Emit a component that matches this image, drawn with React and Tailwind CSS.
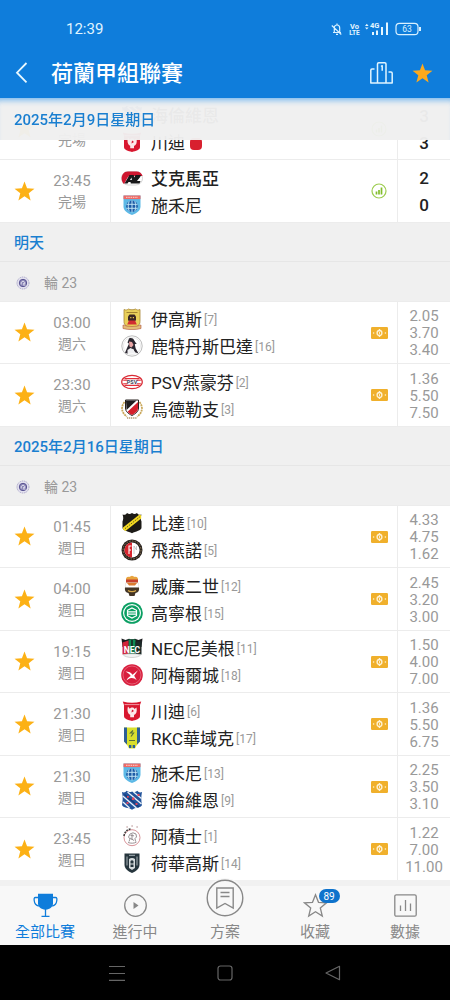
import React from 'react';

const STAR = 'M12 1.500l2.700 7.100 7.700.4-6 4.800 2 7.500L12 17l-6.400 4.300 2-7.500-6-4.800 7.700-.4z';

const Shield = 'M2.5 2h17v10.5c0 4-3.500 6.500-8.500 8.500c-5-2-8.500-4.500-8.500-8.500z';

const crests = {
  heerenveen: (
    <>
      <path d="M1 3c2 1 3.500 .3 4.500-1.200c2.500 1 3.500 2 5.500 .7c2 1.300 3.500 .5 5.500-.7c1 1.500 2.500 2.200 4.500 1.200c-1 5-.8 9 0 13c-1 3.500-7 2-10 4.800c-3-2.800-9-1.300-10-4.800c.8-4 1-8 0-13z" fill="#23549b" />
      <path d="M1.800 7L15.500 19M6.500 3L20.500 15M2 13l6.500 6M12.500 3L20.500 9.500" stroke="#e8f0fa" strokeWidth="1.300" />
      <path d="M3.500 5.500l14.500 12.500" stroke="#173a78" strokeWidth="1.200" />
      <path d="M11 8.500h2.500V11H11zM5.500 13h2v2h-2zM16.500 5h2v2h-2zM6 7h1.800v1.800H6zM14.500 14h2v2h-2z" fill="#e0455c" />
    </>
  ),
  twente: (
    <>
      <path d="M1.800 1.500c6 1.600 12.400 1.600 18.400 0l-1.200 3.500v11c0 3-4 3.800-8 5c-4-1.200-8-2-8-5V5z" fill="#d8172f" />
      <path d="M3.500 4.600h15" stroke="#f3a4ad" strokeWidth=".9" />
      <path d="M7 6.500l1.800 2.200c1-1.700 4-1.700 4.700.2l2-1.400c.8 4-.2 6.500-2.500 7.500v2.300h-3.800v-2.500C6.500 13.500 6 10 7 6.500z" fill="#fbe9ea" />
      <path d="M11 9.500l2 1.500-2.500 1.500z" fill="#d8172f" />
    </>
  ),
  az: (
    <>
      <rect x=".5" y="4.500" width="21" height="13.500" rx="6.700" fill="#fff" stroke="#b9b9b9" strokeWidth=".6" />
      <path d="M7 4.500h8.500c3.200 0 5.500 2 6 4.500H9c-3 0-4 6-6 8C-1 14 0 4.500 7 4.500z" fill="#cf1730" />
      <path d="M3.500 16.500l5-8.500h4.200l.6 2.500 1.200-2.500h5.500l-.8 2-3.200 4h3.500l-1 2.500h-8.700l-.3-1.500H7.500l-1 1.500z" fill="#18181a" />
      <path d="M9 13l1.500-2.500.4 2.500z" fill="#fff" />
    </>
  ),
  zwolle: (
    <>
      <path d="M2.500 1.500h17v11c0 4-3.500 6.500-8.500 8.500c-5-2-8.500-4.500-8.500-8.500z" fill="#5db9e6" />
      <path d="M2.500 1.500h17v3.600h-17z" fill="#ee6a66" />
      <path d="M5 3.300h12" stroke="#fbd5d2" strokeWidth="1" strokeDasharray="1.500 .8" />
      <circle cx="11" cy="12.200" r="5.800" fill="#1d5ba6" />
      <path d="M11 6.400v12M5.500 10.300h11M5.500 14.300h11M8.200 7.200c-1.300 3-1.300 7 0 10M13.800 7.200c1.300 3 1.300 7 0 10" stroke="#bfe4f6" strokeWidth="1" fill="none" />
    </>
  ),
  eagles: (
    <>
      <path d="M3 1.500c2 1 3.500.2 4.500-.5c1.500 1 5.500 1 7 0c1 .7 2.500 1.500 4.500.5v12c0 4-3 5.500-8 7c-5-1.500-8-3-8-7z" fill="#e9d05a" stroke="#a88735" strokeWidth=".8" />
      <path d="M5.500 4.500h11" stroke="#9a7b2b" strokeWidth=".9" />
      <path d="M7 8.500L8.500 6.500h5L15 8.500v3.500l-1.500 2h-5L7 12z" fill="#3b2723" />
      <path d="M8 12.500h6l1.800 4H6.200z" fill="#d22c31" />
      <path d="M9.200 9h1.200v1.200H9.200zM11.800 9H13v1.200h-1.200z" fill="#e9c94a" />
      <path d="M2 17c5 2 13 2 18 0v3.500c-5 1.500-13 1.500-18 0z" fill="#e3bd78" stroke="#b0563f" strokeWidth=".6" />
    </>
  ),
  sparta: (
    <>
      <circle cx="11" cy="11" r="10.200" fill="#fff" stroke="#aaa" strokeWidth=".8" />
      <circle cx="11" cy="11" r="8.600" fill="none" stroke="#ddd" strokeWidth=".6" />
      <path d="M8 3.500c2-1 4.500-.3 5 1.500l1.500 2.500 1.300 1-2 .8.800 4 2.900 5.200-3.500-1.300-2-3.500-3 1.500-2.500 3.300-2.500-.4 2-5 2-4.300-1.500-1.300z" fill="#2b2730" />
      <path d="M8 6.500l3 .5 1.500 3-2 2.500-2-1z" fill="#e9a5a5" />
      <path d="M6.500 15l3-2 3 1.500 1.500 3.500-4 .5-3.500-.5z" fill="#f0f0f2" />
    </>
  ),
  psv: (
    <>
      <ellipse cx="11" cy="11" rx="10.300" ry="6.600" fill="#fff" stroke="#d92b35" strokeWidth="1.200" />
      <path d="M3.500 7.600h15M2.200 9.300h4M15.800 9.300h4M2.200 12.700h4M15.800 12.700h4M3.500 14.400h15" stroke="#e0303b" strokeWidth="1.100" />
      <text x="11" y="13" fontSize="5.500" fontWeight="700" textAnchor="middle" fill="#3b3f59" fontFamily="Roboto">PSV</text>
    </>
  ),
  utrecht: (
    <>
      <path d="M3.500 4C-.5 9 .5 15 6 18.500M18.500 4c4 5 3 11-2.500 14.500" fill="none" stroke="#c9a85c" strokeWidth="1.800" strokeDasharray="2 .7" />
      <path d="M4.500 2h13v8c0 3.500-2.500 5.500-6.500 7.500c-4-2-6.500-4-6.500-7.500z" fill="#fff" stroke="#26211f" strokeWidth="1" />
      <path d="M5 2.500h10.500L5.500 12z" fill="#201e1f" />
      <path d="M17 4v6c0 3.500-2.500 5-6 7c-2-1-3.500-2-4.500-3.200z" fill="#d5202b" />
      <path d="M6 20h10" stroke="#b29a70" strokeWidth="1.300" strokeDasharray="1.200 .7" />
    </>
  ),
  nac: (
    <>
      <path d="M1.500 2.500c2.500.8 3.500 0 4.500-1.500c2 1.200 3 1.200 5 0c2 1.200 3 1.200 5 0c1 1.500 2 2.300 4.500 1.500c-1.200 3-.8 5 0 7v6c0 3.500-6 3.500-9.500 5.800c-3.500-2.300-9.500-2.300-9.500-5.800v-6c.8-2 1.200-4 0-7z" fill="#1c1a16" />
      <path d="M2 15.500L18.500 2.500l1.700 1V6.500L4.500 19 2 17.500z" fill="#f3d921" />
      <path d="M4 16.700L19 4.700" stroke="#5c5312" strokeWidth=".9" strokeDasharray="1.500 1" />
    </>
  ),
  feyenoord: (
    <>
      <circle cx="11" cy="11" r="10.500" fill="#26211f" />
      <circle cx="11" cy="11" r="9" fill="none" stroke="#a98d5c" strokeWidth=".8" strokeDasharray="1.600 1.200" />
      <circle cx="11" cy="11" r="7.600" fill="#fff" />
      <path d="M11 3.400a7.600 7.600 0 0 0 0 15.200z" fill="#d7262e" />
      <path d="M7.500 7h3M8 7v8M8 11h2" stroke="#fff" strokeWidth="1.100" />
      <path d="M13 7l2.500 4V7M13 7v8" stroke="#aaa" strokeWidth=".6" fill="none" />
    </>
  ),
  willem: (
    <>
      <path d="M5 4.500c0-2 1.500-3 3-2.500L11 .8 14 2c1.500-.5 3 .5 3 2.500v3H5z" fill="#e8a43d" />
      <path d="M5 4.500h12v3H5z" fill="#c7402e" />
      <path d="M4.500 8h13v5h-13z" fill="#fff" stroke="#ccc" strokeWidth=".4" />
      <path d="M6 8l2 2.500h6L16 8z" fill="#db7a2e" />
      <path d="M4 12.500h14c.5 3.500-1 5-3.500 5.500l-1 3h-5l-1-3C5 17.500 3.500 16 4 12.500z" fill="#433526" />
      <path d="M7 15.500c2 1.500 6 1.500 8 0" stroke="#d9aa48" strokeWidth="1.200" fill="none" />
    </>
  ),
  groningen: (
    <>
      <circle cx="11" cy="11" r="10.800" fill="#0b9f63" />
      <circle cx="11" cy="11" r="9" fill="#fff" />
      <circle cx="11" cy="11" r="7.800" fill="#0b9f63" />
      <path d="M6.500 8.300L11 6l4.500 2.300v5.400L11 16l-4.500-2.300z" fill="none" stroke="#fff" strokeWidth="1.200" />
      <path d="M6.500 9.800h9M6.500 12.200h9" stroke="#fff" strokeWidth="1.200" />
    </>
  ),
  nec: (
    <>
      <path d="M.5 1.500l4 1.500 3.500-1.200L11 2.500l3-.7L17.500 3l4-1.500-1 8.500H1.500z" fill="#1d1d1f" />
      <path d="M7.500 2.500h7V10h-7z" fill="#0e8c55" />
      <path d="M10 2.500h2V9h-2z" fill="#163a2c" />
      <path d="M1.500 5.500l6-2v14h-6z" fill="#d3253a" />
      <path d="M7.500 10h7v7.500h-7z" fill="#18794d" />
      <path d="M14.500 5l6-1v13.500h-6z" fill="#1b2a28" />
      <text x="11" y="15.600" fontSize="8.500" fontWeight="700" textAnchor="middle" fill="#fff" fontFamily="Roboto">NEC</text>
      <path d="M2 17.500c5-1 13-1 18 0c-2.500 4-15.500 4-18 0z" fill="#f2f2f2" stroke="#aaa" strokeWidth=".5" />
    </>
  ),
  almere: (
    <>
      <circle cx="11" cy="11" r="10.800" fill="#d81e3d" />
      <circle cx="11" cy="11" r="9" fill="none" stroke="#ee8b9b" strokeWidth=".6" />
      <path d="M4.500 7.500c3.500 0 5.500 1.200 7 3.200L17 6.300l-3.800 5.500 2.500 4.500c-1.700-1.500-3.400-2.300-5.200-2.200c-2.200.2-3.800 1.400-5 2.400c1-2.500 2.500-3.600 4.200-4.500C8.500 10 6.800 8.700 4.500 7.500z" fill="#fff" />
    </>
  ),
  rkc: (
    <>
      <path d="M3 .500h16v14L15.500 18.500 14 21.500H8l-1.500-3L3 14.500z" fill="#d8df2c" />
      <path d="M3 .500h3v17L3 14.500zM19 .500h-3v17l3-3z" fill="#2c5f96" />
      <path d="M12 3.500l-2.500 2.500h3L10 9.500M8 13.500h6" stroke="#56703a" strokeWidth="1.200" fill="none" />
      <path d="M8 18h2.300v3H8zM11.700 18H14v3h-2.300z" fill="#2c5f96" />
    </>
  ),
  ajax: (
    <>
      <circle cx="11" cy="12.700" r="8" fill="#fff" stroke="#d2878d" strokeWidth=".9" />
      <path d="M3 11C3.500 7 6 4.500 9.500 4" stroke="#393939" strokeWidth="1.500" strokeDasharray="1.800 1" fill="none" />
      <path d="M10.500 1h1.200M5.500 2h1.200M15.500 2h1.200" stroke="#9a6a6a" strokeWidth="1.200" />
      <path d="M8 16.500l1-2.500-1.500-2L9 9l3-1.200 3 1.200.5 3-1.500 1.500.5 3M9.500 10.500l3.500.3M9 13l4 2.500M11 9v6M7 17.500c3 1 6 1 8.500-.5" stroke="#8d8488" strokeWidth=".9" fill="none" />
    </>
  ),
  heracles: (
    <>
      <path d="M3.500 1.500h15v11c0 4-3 6.500-7.500 8.500c-4.500-2-7.500-4.500-7.500-8.500z" fill="#26353d" />
      <path d="M6 4.500v9M16 4.500v9M8 3.300h6" stroke="#a9b3b8" strokeWidth="1" />
      <path d="M8 7c1.500-1.500 4.500-1.500 6 0v9l-3 2-3-2z" fill="#d5dadc" />
      <path d="M9.500 9c1-1 2-1 3 0v6h-3z" fill="#26353d" />
      <path d="M9 12h4" stroke="#d5dadc" strokeWidth="1" />
    </>
  ),
};

function Crest({ id }) {
  return (
    <svg viewBox="0 0 22 22" className="h-[22px] w-[22px] shrink-0" aria-hidden="true">
      {crests[id] || <path d={Shield} fill="#999" />}
    </svg>
  );
}

function Star({ className }) {
  return (
    <svg viewBox="0 0 24 24" className={className} aria-hidden="true">
      <path d={STAR} fill="currentColor" />
    </svg>
  );
}

function MoneyIcon() {
  return (
    <svg viewBox="0 0 17 12" className="h-3 w-[17px]" aria-hidden="true">
      <rect width="17" height="12" rx="1.200" fill="#f0b02c" />
      <path d="M8.500 2v8" stroke="#fff3d6" strokeWidth="1.400" />
      <ellipse cx="8.500" cy="6" rx="2.400" ry="2.500" fill="#f0b02c" stroke="#fff3d6" strokeWidth="1.300" />
      <path d="M8.500 4.800v2.400" stroke="#fff3d6" strokeWidth=".9" />
      <circle cx="2.600" cy="6" r=".8" fill="#fff3d6" />
      <circle cx="14.400" cy="6" r=".8" fill="#fff3d6" />
    </svg>
  );
}

function StatsIcon() {
  return (
    <svg viewBox="0 0 16 16" className="h-4 w-4" aria-hidden="true">
      <circle cx="8" cy="8" r="7" fill="none" stroke="#9ccc4e" strokeWidth="1.200" />
      <path d="M5.500 8.500v3M8 7v4.500M10.500 4.500v7" stroke="#82bd2c" strokeWidth="1.700" />
    </svg>
  );
}

const groups = [
  {
    date: '2025年2月9日星期日',
    pinned: true,
    matches: [
      { time: '', day: '完場', home: ['heerenveen', '海倫維恩'], away: ['twente', '川迪'], score: ['3', '3'], winner: 0, redCard: true },
      { time: '23:45', day: '完場', home: ['az', '艾克馬亞'], away: ['zwolle', '施禾尼'], score: ['2', '0'], winner: 0 },
    ],
  },
  {
    date: '明天',
    round: '輪 23',
    matches: [
      { time: '03:00', day: '週六', home: ['eagles', '伊高斯', 7], away: ['sparta', '鹿特丹斯巴達', 16], odds: ['2.05', '3.70', '3.40'] },
      { time: '23:30', day: '週六', home: ['psv', 'PSV燕豪芬', 2], away: ['utrecht', '烏德勒支', 3], odds: ['1.36', '5.50', '7.50'] },
    ],
  },
  {
    date: '2025年2月16日星期日',
    round: '輪 23',
    matches: [
      { time: '01:45', day: '週日', home: ['nac', '比達', 10], away: ['feyenoord', '飛燕諾', 5], odds: ['4.33', '4.75', '1.62'] },
      { time: '04:00', day: '週日', home: ['willem', '威廉二世', 12], away: ['groningen', '高寧根', 15], odds: ['2.45', '3.20', '3.00'] },
      { time: '19:15', day: '週日', home: ['nec', 'NEC尼美根', 11], away: ['almere', '阿梅爾城', 18], odds: ['1.50', '4.00', '7.00'] },
      { time: '21:30', day: '週日', home: ['twente', '川迪', 6], away: ['rkc', 'RKC華域克', 17], odds: ['1.36', '5.50', '6.75'] },
      { time: '21:30', day: '週日', home: ['zwolle', '施禾尼', 13], away: ['heerenveen', '海倫維恩', 9], odds: ['2.25', '3.50', '3.10'] },
      { time: '23:45', day: '週日', home: ['ajax', '阿積士', 1], away: ['heracles', '荷華高斯', 14], odds: ['1.22', '7.00', '11.00'] },
    ],
  },
];

function Team({ team, bold, redCard }) {
  const [id, name, rank] = team;
  return (
    <div className="flex h-[27px] items-center">
      <Crest id={id} />
      <span className={bold ? 'ml-2 pt-1 text-[17px] font-medium text-[#222]' : 'ml-2 pt-1 text-[17px] text-[#222]'}>{name}</span>
      {rank && <span className="ml-0.5 pt-0.5 text-xs text-[#999]">[{rank}]</span>}
      {redCard && <span className="mt-1 ml-[5px] h-3 w-3 rounded-sm bg-[#d8202f]" />}
    </div>
  );
}

function MatchRow({ match }) {
  return (
    <li className="flex border-b border-[#ececec] bg-white odd:min-h-[62px] even:min-h-[63px]">
      <button type="button" aria-label="收藏" className="flex w-12 shrink-0 items-center justify-center text-[#fcb116]">
        <Star className="h-[23px] w-[23px]" />
      </button>
      <div className="mr-3.5 flex w-12 shrink-0 flex-col justify-center pt-0.5 text-center text-[15px] leading-[21px] text-[#999]">
        <time className="h-[21px]">{match.time}</time>
        <span className="text-sm leading-[21px]">{match.day}</span>
      </div>
      <div className="flex min-w-0 flex-1 flex-col justify-center border-l border-[#ececec] pl-2.5">
        <Team team={match.home} bold={match.winner === 0} />
        <Team team={match.away} redCard={match.redCard} />
      </div>
      <div className="flex w-9 shrink-0 items-center justify-center">{match.score ? <StatsIcon /> : <MoneyIcon />}</div>
      <div className="flex w-[53px] shrink-0 flex-col justify-center border-l border-[#ececec] pt-0.5 text-center">
        {match.score
          ? match.score.map((s, i) => (
              <span key={i} className="text-[17px] leading-[27px] font-medium text-[#222]">{s}</span>
            ))
          : match.odds.map((o, i) => (
              <span key={i} className="text-[15px] leading-[17px] text-[#999]">{o}</span>
            ))}
      </div>
    </li>
  );
}

function RoundIcon() {
  return (
    <svg viewBox="0 0 14 14" className="h-3.5 w-3.5" aria-hidden="true">
      <circle cx="7" cy="7" r="6" fill="#e4e2ef" stroke="#a6a2c6" strokeWidth=".9" strokeDasharray="1.500 .7" />
      <circle cx="7" cy="7" r="3.700" fill="#8d88b8" stroke="#5a5492" strokeWidth="1" />
      <path d="M5.200 8.500V6.500L7 5l1.800 1.500v1.200H7M7 8.800l2.500.4" stroke="#fff" strokeWidth=".7" fill="none" />
    </svg>
  );
}

function Group({ group }) {
  return (
    <section>
      {group.pinned ? (
        <h2 className="sticky top-0 z-10 -mb-[42px] flex h-[42px] items-center bg-[#f0f0f0]/97 px-3.5 pt-0.5 text-[15px] font-medium text-[#1a7fd0] shadow-[inset_0_7px_6px_-5px_#6db3ee]">{group.date}</h2>
      ) : (
        <h2 className="flex h-[39px] items-center border-b border-[#e6e6e6] bg-[#f0f0f0] px-3.5 pt-0.5 text-[15px] font-medium text-[#1a7fd0]">{group.date}</h2>
      )}
      {group.round && (
        <div className="flex h-10 items-center gap-3.5 border-b border-[#ececec] bg-[#f0f0f0] px-4 pt-0.5 text-sm text-[#999]">
          <RoundIcon />
          <span>{group.round}</span>
        </div>
      )}
      <ul>
        {group.matches.map((m, i) => (
          <MatchRow key={i} match={m} />
        ))}
      </ul>
    </section>
  );
}

function StatusIcons() {
  return (
    <svg viewBox="0 0 92 16" className="h-4 w-[92px]" fill="none" stroke="#d9f1ff" strokeWidth="1.200" aria-hidden="true">
      <path d="M3 11.500h8M4.300 11V7c0-4 5.400-4 5.400 0v4M7 2.500v1M6 13.300h2M1.800 4.500l9.500 9" />
      <g fill="#e4f6ff" stroke="none" fontFamily="Roboto" fontWeight="700">
        <text x="24.500" y="7.500" fontSize="7.500" textAnchor="middle">Vo</text>
        <text x="24.500" y="14" fontSize="6.500" textAnchor="middle">LTE</text>
        <text x="40" y="7" fontSize="7.500">4G</text>
        <path d="M35 5l1.800-2.300L38.600 5zM35 6.500h3.600L36.800 8.500zM42 11h2v3h-2zM46 9.500h2V14h-2zM51 6h2v8h-2zM56 1.500h2V14h-2z" />
      </g>
      <rect x="66" y="2.300" width="22" height="11.400" rx="3.500" />
      <path d="M90 6v4" strokeWidth="2" />
      <text x="77" y="11" fontSize="8.500" textAnchor="middle" fill="#d9f1ff" stroke="none" fontFamily="Roboto">63</text>
    </svg>
  );
}

const tabs = [
  {
    label: '全部比賽',
    active: true,
    icon: (
      <>
        <path d="M5 .8h15v9.500c0 3.500-3 6-7.500 6.500C8 16.300 5 13.800 5 10.300z" fill="currentColor" stroke="none" />
        <path d="M5 4.500H2.500C1 4.500 1 6 1.200 7.500c.3 3 1.800 5 4.600 5.500M20 4.500h2.500c1.500 0 1.500 1.500 1.300 3c-.3 3-1.800 5-4.600 5.500M12.500 16v7M8.500 23.300h8" />
      </>
    ),
  },
  {
    label: '進行中',
    icon: (
      <>
        <circle cx="12.500" cy="12.500" r="10.800" />
        <path d="M10.500 9l5 3.500-5 3.500z" fill="currentColor" stroke="none" />
      </>
    ),
  },
  { label: '方案', raised: true },
  {
    label: '收藏',
    badge: '89',
    icon: <path d="M12.500 1.800l3 7.500 8 .5-6.200 5.200 2 8-6.800-4.300L5.700 23l2-8L1.500 9.800l8-.5z" />,
  },
  {
    label: '數據',
    icon: (
      <>
        <rect x="1.800" y="1.800" width="21.400" height="21.400" rx="1.500" />
        <path d="M7.500 12.500v5.500M12.500 7v11M17.500 10.500v7.500" />
      </>
    ),
  },
];

function Tab({ tab }) {
  return (
    <button
      type="button"
      aria-current={tab.active ? 'page' : undefined}
      className={tab.active ? 'flex flex-1 flex-col items-center text-[#0f7ddb]' : 'flex flex-1 flex-col items-center text-[#888]'}
    >
      {tab.raised ? (
        <span className="-mt-2 rounded-full bg-[#f8f8f8] p-px">
          <svg viewBox="0 0 38 38" className="h-[38px] w-[38px]" fill="none" stroke="currentColor" strokeWidth="1.400" aria-hidden="true">
            <circle cx="19" cy="19" r="17.800" />
            <path d="M10.800 9h16.400v20L19 24.500 10.800 29zM14.500 13.500h9M14.500 17.500h9" />
          </svg>
        </span>
      ) : (
        <span className="relative mt-[7px]">
          <svg viewBox="0 0 25 25" className="h-[25px] w-[25px]" fill="none" stroke="currentColor" strokeWidth="1.300" aria-hidden="true">
            {tab.icon}
          </svg>
          {tab.badge && (
            <span className="absolute -top-1 left-4 flex h-3.5 w-[21px] items-center justify-center rounded-full bg-[#0f73cc] text-[10px] text-white">{tab.badge}</span>
          )}
        </span>
      )}
      <span className="mt-auto mb-[3px] text-[15px] leading-5">{tab.label}</span>
    </button>
  );
}

export default function App() {
  return (
    <div className="flex h-screen flex-col bg-[#f0f0f0] font-['Roboto','Noto_Sans_CJK_TC',sans-serif]">
      <header className="flex h-[98px] shrink-0 flex-col bg-[#0f7ddb] text-white">
        <div className="flex items-center justify-between pt-[21px] pr-7 pl-[66px] text-[15px] leading-4 text-[#e0f5ff]">
          <span>12:39</span>
          <StatusIcons />
        </div>
        <div className="mt-5 flex h-8 items-center pr-4 pl-3">
          <button type="button" aria-label="返回" className="flex w-[39px] items-center">
            <svg viewBox="0 0 20 24" className="h-6 w-5" fill="none" stroke="#e8f8ff" strokeWidth="1.800" aria-hidden="true">
              <path d="M14.500 2L5 11.700l9.500 9.700" />
            </svg>
          </button>
          <h1 className="flex-1 text-[22px] font-medium">荷蘭甲組聯賽</h1>
          <button type="button" aria-label="排名" className="mr-[17px]">
            <svg viewBox="0 0 25 24" className="h-6 w-[25px]" fill="none" stroke="#dff4ff" strokeWidth="1.500" strokeLinejoin="round" aria-hidden="true">
              <path d="M8.500 22V3c0-.8.400-1.200 1.200-1.200h6.100c.8 0 1.200.4 1.200 1.200v19M5.500 8H3c-.8 0-1.200.4-1.200 1.200V22h21.400V12.200c0-.8-.4-1.200-1.200-1.200h-2.500M12 5.500l1.200-.8v5" />
            </svg>
          </button>
          <button type="button" aria-label="收藏聯賽" className="text-[#fca91c]">
            <Star className="h-[23px] w-[23px]" />
          </button>
        </div>
      </header>

      <main className="min-h-0 flex-1 overflow-y-auto [scrollbar-width:none]">
        {groups.map((g) => (
          <Group key={g.date} group={g} />
        ))}
      </main>

      <nav className="z-20 flex h-[65px] shrink-0 border-t-[6px] border-[#f1f1f1] bg-[#f8f8f8]">
        {tabs.map((t) => (
          <Tab key={t.label} tab={t} />
        ))}
      </nav>

      <footer className="flex h-[55px] shrink-0 items-center justify-center gap-[92px] bg-black text-[#666]">
        <button type="button" aria-label="最近">
          <svg viewBox="0 0 16 16" className="h-4 w-4" stroke="currentColor" strokeWidth="1.200" aria-hidden="true">
            <path d="M0 1.500h16M0 8.500h16M0 15.300h16" />
          </svg>
        </button>
        <button type="button" aria-label="主畫面">
          <svg viewBox="0 0 16 16" className="h-4 w-4" fill="none" stroke="currentColor" strokeWidth="1.200" aria-hidden="true">
            <rect x="1" y="1" width="14" height="14" rx="2.500" />
          </svg>
        </button>
        <button type="button" aria-label="上一頁">
          <svg viewBox="0 0 16 16" className="h-4 w-4" fill="none" stroke="currentColor" strokeWidth="1.200" strokeLinejoin="round" aria-hidden="true">
            <path d="M14.500 1.300v13.400L1 8z" />
          </svg>
        </button>
      </footer>
    </div>
  );
}
